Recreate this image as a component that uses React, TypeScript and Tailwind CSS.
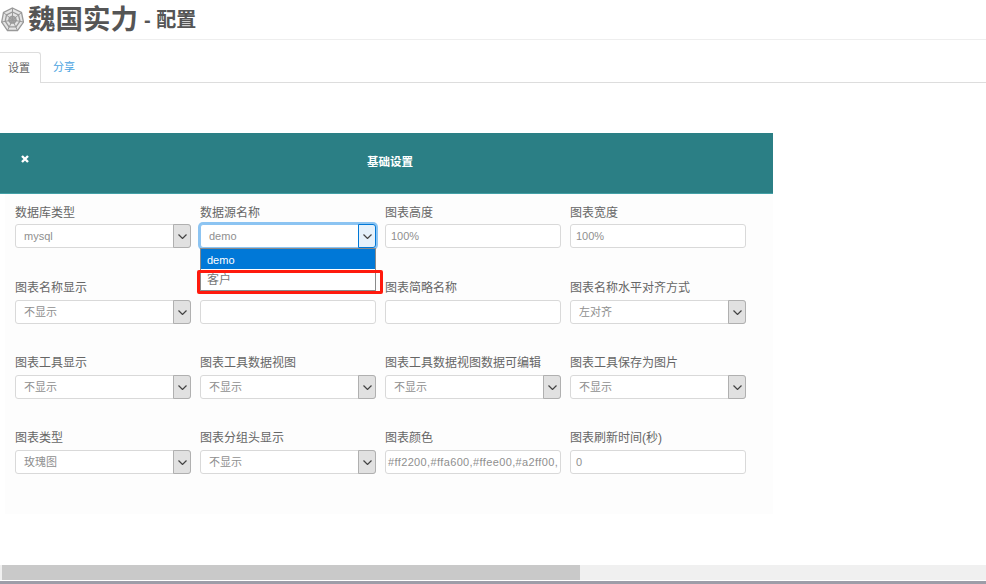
import React from 'react';

const cjk = "font-['Liberation_Sans','Noto_Sans_CJK_SC',sans-serif]";

const Arrow: React.FC<{ active?: boolean }> = ({ active }) => (
  <span className={`-my-px -mr-px flex h-[24px] w-[18px] shrink-0 items-center justify-center rounded-r-[3px] border ${active ? 'bg-[#e5f1fb] border-[#0078d7]' : 'bg-[#e1e1e1] border-[#b0b0b0]'}`}>
    <svg width="9" height="5" viewBox="0 0 9 5" fill="none" stroke="#444" strokeWidth="1.2">
      <path d="M0.5 0.5 L4.5 4.5 L8.5 0.5" />
    </svg>
  </span>
);

const Field: React.FC<{ label: string; value?: string; select?: boolean; active?: boolean; first?: boolean; wide?: boolean }> = ({ label, value, select, active, first, wide }) => (
  <div className="h-[75px] pt-[11px]">
    <div className={`text-[12px] leading-[16px] text-[#666] ${first ? 'h-[19px]' : 'h-[20px]'}`}>{label}</div>
    <div className={`flex h-[24px] w-[176px] items-center rounded-[3px] border bg-white ${active ? 'border-[#8cc4f2] shadow-[0_0_0_2px_#8cc4f2]' : 'border-[#d9d9d9]'}`}>
      <span className={`flex-1 overflow-hidden whitespace-nowrap text-[11px] text-[#8f8f8f] ${select ? 'pl-2' : wide ? 'pl-[2px] tracking-[0.37px]' : 'pl-[5px]'}`}>{value}</span>
      {select && <Arrow active={active} />}
    </div>
  </div>
);

const Web = () => (
  <svg width="23" height="25" viewBox="0 0 23 25" fill="none" stroke="#999" strokeWidth="1.3" className="ml-[1px] shrink-0">
    <path d="M11.5 1 L20.5 5.5 L22.5 15 L16.5 23.5 L6.5 23.5 L0.7 15 L2.5 5.5 Z" fill="#e4e4e4" />
    <path d="M11.5 5 L17.5 8 L19 14.2 L15 19.8 L8 19.8 L4.2 14.2 L5.5 8 Z" />
    <path d="M11.5 9 L14.5 10.5 L15.3 13.5 L13.3 16 L9.7 16 L7.7 13.5 L8.5 10.5 Z" fill="#aaa" />
    <path d="M11.5 1 V13 M20.5 5.5 L11.5 13 M22.5 15 L11.5 13 M16.5 23.5 L11.5 13 M6.5 23.5 L11.5 13 M0.7 15 L11.5 13 M2.5 5.5 L11.5 13" strokeWidth="1" />
  </svg>
);

const fields = [
  { label: '数据库类型', value: 'mysql', select: true, first: true },
  { label: '数据源名称', value: 'demo', select: true, active: true, first: true },
  { label: '图表高度', value: '100%', first: true },
  { label: '图表宽度', value: '100%', first: true },
  { label: '图表名称显示', value: '不显示', select: true },
  { label: '' },
  { label: '图表简略名称' },
  { label: '图表名称水平对齐方式', value: '左对齐', select: true },
  { label: '图表工具显示', value: '不显示', select: true },
  { label: '图表工具数据视图', value: '不显示', select: true },
  { label: '图表工具数据视图数据可编辑', value: '不显示', select: true },
  { label: '图表工具保存为图片', value: '不显示', select: true },
  { label: '图表类型', value: '玫瑰图', select: true },
  { label: '图表分组头显示', value: '不显示', select: true },
  { label: '图表颜色', value: '#ff2200,#ffa600,#ffee00,#a2ff00,', wide: true },
  { label: '图表刷新时间(秒)', value: '0' },
];

const App: React.FC = () => (
  <div className={`relative h-[584px] w-[986px] overflow-hidden bg-white ${cjk}`}>
    <div className="flex h-[40px] items-center border-b border-[#eee] text-[#555]">
      <Web />
      <span className="ml-[4px] text-[27.5px] font-bold leading-none">魏国实力</span>
      <span className="ml-[6px] text-[20px] font-bold leading-none">- 配置</span>
    </div>

    <div className="mt-[12px] flex h-[31px] border-b border-[#ddd] text-[11px]">
      <div className="flex h-[31px] w-[41px] items-center justify-center rounded-tr-[3px] border-r border-t border-[#ddd] bg-white pr-[2px] text-[#666]">设置</div>
      <div className="ml-[12px] flex h-[30px] items-center text-[#4aa3df]">分享</div>
    </div>

    <div className="mt-[50px] w-[773px]">
      <div className="relative flex h-[61px] items-center justify-center border-b border-[#43a0a6] bg-[#2b7f85] pl-[7px] text-[11.5px] font-bold text-white">
        <svg width="8" height="8" viewBox="0 0 8 8" stroke="#fff" strokeWidth="2.4" className="absolute left-[21px] top-[22px]">
          <path d="M1 1 L7 7 M7 1 L1 7" />
        </svg>
        基础设置
      </div>
      <div className="ml-[5px] h-[320px] bg-[#fdfdfd] pl-[10px]">
        <div className="grid w-[731px] grid-cols-4 gap-x-[9px]">
          {fields.map((f, i) => (
            <Field key={i} {...f} />
          ))}
        </div>
      </div>
    </div>

    {/* open select list */}
    <div className="absolute left-[200px] top-[248px] w-[176px] border border-[#8a8a8a] bg-white text-[11px]">
      <div className="flex h-[20px] items-center bg-[#0078d7] pl-[6px] pt-[2px] text-white">demo</div>
      <div className="flex h-[21px] items-center pl-[6px] text-[12px] text-[#777]">客户</div>
    </div>
    {/* red highlight */}
    <div className="absolute left-[197px] top-[270px] h-[24px] w-[186px] rounded-[2px] border-[3px] border-[#ff1a0d]" />

    <div className="absolute bottom-[4px] left-0 flex h-[15px] w-full bg-[#f0f0f0] pl-[2px]">
      <div className="h-full w-[578px] bg-[#c9c9c9]" />
    </div>
    <div className="absolute bottom-0 left-0 h-[3px] w-full bg-[#9d9da8]" />
  </div>
);

export default App;
